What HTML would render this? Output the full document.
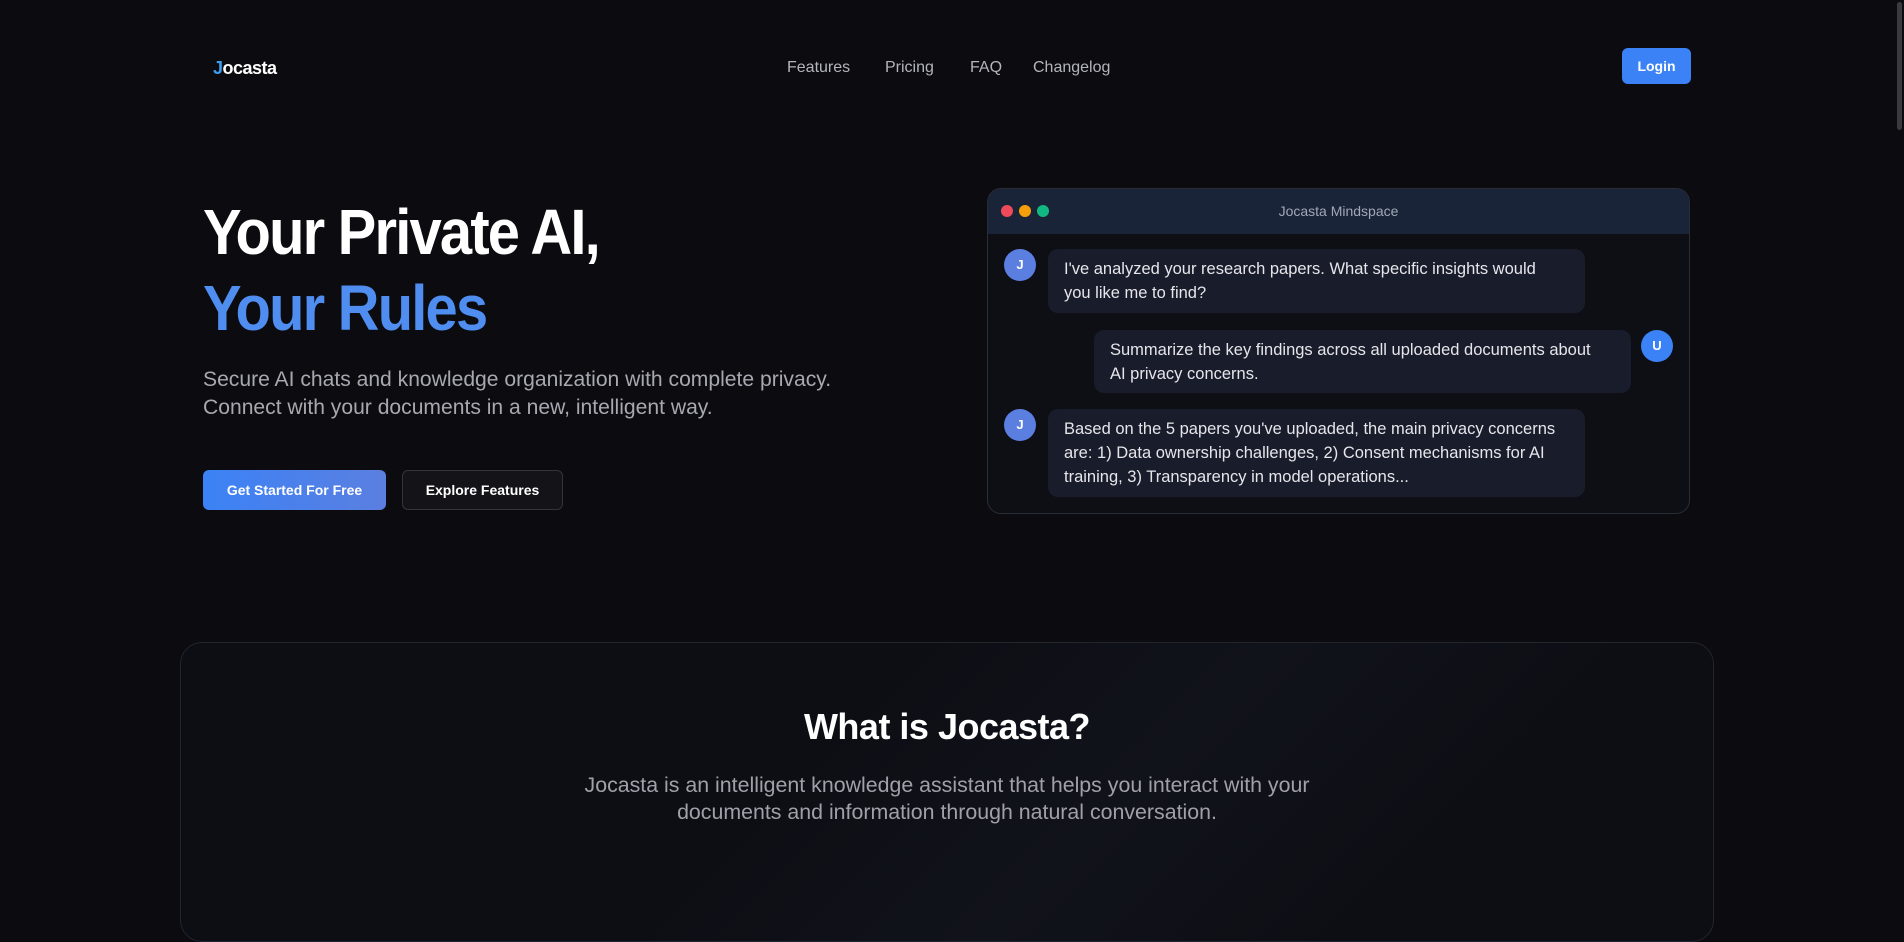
<!DOCTYPE html>
<html><head><meta charset="utf-8"><style>
*{margin:0;padding:0;box-sizing:border-box}
html,body{width:1904px;height:880px;overflow:hidden;background:#0b0b10;font-family:"Liberation Sans",sans-serif;color:#fff}
.abs{position:absolute}
.nav a{position:absolute;top:59px;color:#b4b4bc;font-size:16px;text-decoration:none}
.bub{position:absolute;background:#181c2b;border-radius:10px;color:#e6e6ea;font-size:16.5px;line-height:24px;padding:8px 16px;white-space:nowrap}
.av{position:absolute;width:32px;height:32px;border-radius:50%;color:#fff;font-size:13px;font-weight:bold;text-align:center;line-height:32px}
</style></head><body>
<div class="abs" style="left:213px;top:58px;font-size:18px;font-weight:bold;letter-spacing:-0.5px"><span style="color:#3b9cf0">J</span>ocasta</div>
<div class="nav"><a style="left:787px">Features</a><a style="left:885px">Pricing</a><a style="left:970px">FAQ</a><a style="left:1033px">Changelog</a></div>
<div class="abs" style="left:1622px;top:48px;width:69px;height:36px;background:#3b82f6;border-radius:6px;font-size:14px;font-weight:bold;text-align:center;line-height:36px">Login</div>
<div class="abs" style="left:203px;top:194px;font-size:64px;font-weight:bold;letter-spacing:-2px;line-height:76px;transform:scaleX(0.905);transform-origin:left top;white-space:nowrap">Your Private AI,<br><span style="color:#4f8ef0">Your Rules</span></div>
<div class="abs" style="left:203px;top:366px;font-size:21.1px;line-height:28px;color:#a8a8b0;white-space:nowrap">Secure AI chats and knowledge organization with complete privacy.<br>Connect with your documents in a new, intelligent way.</div>
<div class="abs" style="left:203px;top:470px;width:183px;height:40px;border-radius:6px;background:linear-gradient(90deg,#3b82f6,#5b7fe0);font-size:14px;font-weight:bold;text-align:center;line-height:40px">Get Started For Free</div>
<div class="abs" style="left:402px;top:470px;width:161px;height:40px;border-radius:6px;background:#141418;border:1px solid #34343c;font-size:14px;font-weight:bold;text-align:center;line-height:38px">Explore Features</div>
<div class="abs" style="left:987px;top:188px;width:703px;height:326px;border-radius:14px;background:#0e0f15;border:1px solid #2a2d38;overflow:hidden">
 <div style="height:45px;background:#1a2438;position:relative">
  <span class="abs" style="left:13px;top:16px;width:12px;height:12px;border-radius:50%;background:#ef4a5a"></span>
  <span class="abs" style="left:31px;top:16px;width:12px;height:12px;border-radius:50%;background:#f59e0b"></span>
  <span class="abs" style="left:49px;top:16px;width:12px;height:12px;border-radius:50%;background:#10b981"></span>
  <div style="text-align:center;line-height:45px;font-size:14px;color:#a0a8b8">Jocasta Mindspace</div>
 </div>
</div>
<div class="av" style="left:1004px;top:249px;background:#5b7fe0">J</div>
<div class="bub" style="left:1048px;top:249px;width:537px;height:64px">I've analyzed your research papers. What specific insights would<br>you like me to find?</div>
<div class="bub" style="left:1094px;top:330px;width:537px;height:63px">Summarize the key findings across all uploaded documents about<br>AI privacy concerns.</div>
<div class="av" style="left:1641px;top:330px;background:#3b82f6">U</div>
<div class="av" style="left:1004px;top:409px;background:#5b7fe0">J</div>
<div class="bub" style="left:1048px;top:409px;width:537px;height:88px">Based on the 5 papers you've uploaded, the main privacy concerns<br>are: 1) Data ownership challenges, 2) Consent mechanisms for AI<br>training, 3) Transparency in model operations...</div>
<div class="abs" style="left:180px;top:642px;width:1534px;height:300px;border-radius:22px;border:1px solid #23252e;background:linear-gradient(135deg,#0d0e14 40%,#11131b 60%,#0d0e14 80%)"></div>
<div class="abs" style="left:0;width:1894px;top:706px;text-align:center;font-size:36px;font-weight:bold;letter-spacing:-0.5px">What is Jocasta?</div>
<div class="abs" style="left:0;width:1894px;top:772px;text-align:center;font-size:21.35px;line-height:27px;color:#a0a0a8">Jocasta is an intelligent knowledge assistant that helps you interact with your<br>documents and information through natural conversation.</div>
<div class="abs" style="left:1896px;top:0;width:8px;height:880px;background:#0b0b10"></div>
<div class="abs" style="left:1897px;top:2px;width:5px;height:128px;border-radius:3px;background:#3a3a40"></div>
</body></html>
